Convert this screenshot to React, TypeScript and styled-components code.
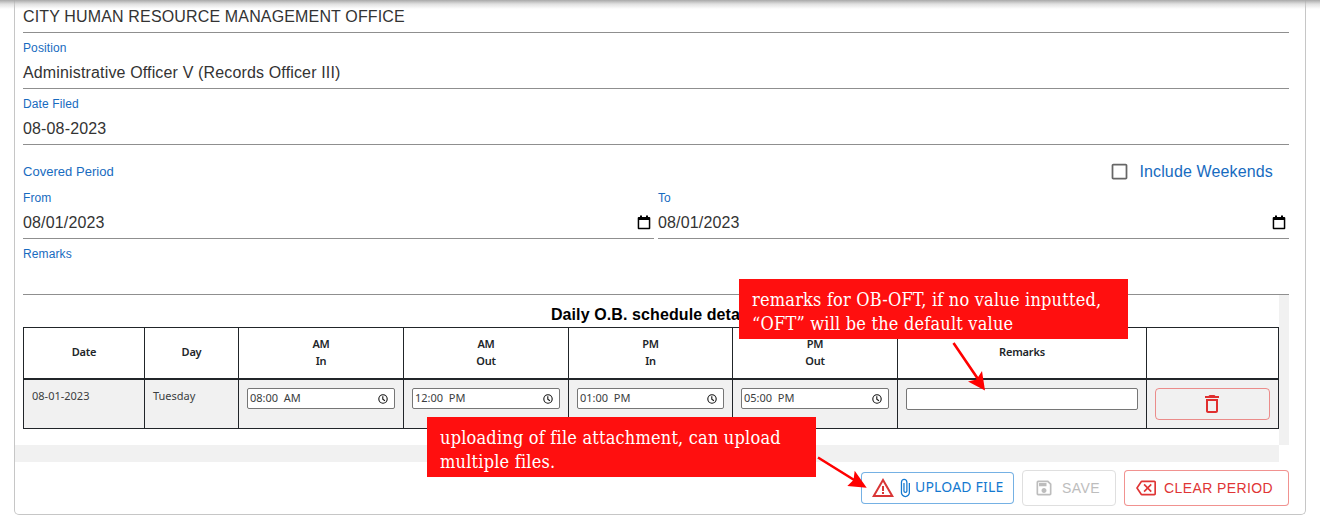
import React from "react";
import styled, { createGlobalStyle } from "styled-components";
import {
  MdAttachFile,
  MdCheckBoxOutlineBlank,
  MdDeleteOutline,
  MdOutlineBackspace,
  MdOutlineSave,
  MdWarningAmber,
} from "react-icons/md";

const GlobalStyle = createGlobalStyle`
  *, *::before, *::after { box-sizing: border-box; }
  body { margin: 0; background: #fff; overflow: hidden; }
`;

const Page = styled.main`
  position: relative;
  width: 1320px;
  height: 527px;
  overflow: hidden;
  padding: 0 14px;
  font-family: "Liberation Sans", Arial, sans-serif;
  color: #333;
`;

const TopShadow = styled.div`
  position: absolute;
  inset: 0 0 auto 0;
  height: 9px;
  background: linear-gradient(#a9a9a9, rgba(200, 200, 200, 0.55) 45%, rgba(255, 255, 255, 0));
`;

const Card = styled.section`
  width: 1292px;
  height: 515px;
  padding: 1px 16px 0 8px;
  border: 1px solid #c6c6c6;
  border-top: 0;
  border-radius: 0 0 5px 5px;
`;

const Stack = styled.div`
  display: flex;
  flex-direction: column;
  gap: 8px;
`;

const Field = styled.div`
  flex: 1;
`;

const Label = styled.div`
  height: 16px;
  line-height: 14px;
  font-size: 12px;
  letter-spacing: 0.12px;
  color: #176bc0;
`;

const Value = styled.div`
  display: flex;
  align-items: center;
  justify-content: space-between;
  height: 32px;
  padding-right: 3px;
  border-bottom: 1px solid #8f8f8f;
  font-size: 16px;
  letter-spacing: 0.15px;
`;

const PeriodHeader = styled.div`
  display: flex;
  align-items: center;
  justify-content: space-between;
  height: 46px;
  padding: 7px 16px 0 0;
  color: #176bc0;
`;

const PeriodTitle = styled.span`
  font-size: 13px;
  letter-spacing: 0.03px;
`;

const CheckLabel = styled.label`
  display: flex;
  align-items: center;
  gap: 9px;
  font-size: 16px;
  letter-spacing: 0.14px;
  svg { color: #666; }
`;

const PeriodRow = styled.div`
  display: flex;
  gap: 4px;
  margin-bottom: 8px;
`;

const ScrollRegion = styled.div`
  display: grid;
  grid-template-columns: 1256px 10px;
  grid-template-rows: 150px 17px;
`;

const ScrollContent = styled.div``;

const VerticalTrack = styled.div`
  background: #f1f1f1;
`;

const HorizontalTrack = styled.div`
  margin-left: -8px;
  background: #f1f1f1;
`;

const TableTitle = styled.h2`
  height: 32px;
  margin: 0;
  padding: 4px 0 0 7px;
  line-height: 32px;
  text-align: center;
  font-size: 16px;
  letter-spacing: 0.1px;
  color: #000;
`;

const Table = styled.div`
  border: 1px solid #212529;
  width: 1256px;
  font-family: "Noto Sans", "Open Sans", sans-serif;
  color: #212529;
`;

const TableRow = styled.div<{ $head?: boolean }>`
  display: grid;
  grid-template-columns: 120px 94px 165px 165px 164px 165px 249px 132px;
  height: ${(p) => (p.$head ? 52 : 48)}px;
  background: ${(p) => (p.$head ? "#fff" : "#f1f1f1")};
  border-bottom: ${(p) => (p.$head ? "2px solid #212529" : "0")};
`;

const HeadCell = styled.div`
  display: flex;
  align-items: center;
  justify-content: center;
  padding-bottom: 3px;
  text-align: center;
  white-space: pre;
  font-size: 11px;
  line-height: 17px;
  font-weight: 600;
  letter-spacing: -0.2px;
  & + & { border-left: 1px solid #212529; }
`;

const Cell = styled.div`
  padding: 8px;
  font-size: 11px;
  line-height: 16px;
  color: #3a3d40;
  & + & { border-left: 1px solid #212529; }
`;

const InputBox = styled.div<{ $tall?: boolean }>`
  display: flex;
  align-items: center;
  justify-content: space-between;
  height: ${(p) => (p.$tall ? 22 : 21)}px;
  padding: 0 6px 1px 2px;
  border: 1px solid #767676;
  border-radius: 2px;
  background: #fff;
  white-space: pre;
  svg { position: relative; top: 1px; }
`;

const DeleteButton = styled.button`
  display: flex;
  align-items: center;
  justify-content: center;
  width: 115px;
  height: 32px;
  padding: 0 2px 0 0;
  border: 1px solid rgba(229, 57, 53, 0.55);
  border-radius: 4px;
  background: transparent;
  color: #e02f2f;
`;

const Actions = styled.div`
  display: flex;
  align-items: center;
  justify-content: flex-end;
  gap: 8px;
  height: 36px;
  margin-top: 8px;
`;

const tones = {
  blue: ["#1479d0", "rgba(25, 125, 210, 0.6)"],
  grey: ["#bdbdbd", "#dfdfdf"],
  red: ["#e03535", "rgba(229, 57, 53, 0.55)"],
};

const ActionButton = styled.button<{ $tone: keyof typeof tones; $width: number; $compact?: boolean }>`
  display: flex;
  align-items: center;
  gap: ${(p) => (p.$compact ? 0 : 8)}px;
  width: ${(p) => p.$width}px;
  height: ${(p) => (p.$compact ? 32 : 36)}px;
  padding: 0 0 0 ${(p) => (p.$compact ? 9 : 11)}px;
  border: 1px solid ${(p) => tones[p.$tone][1]};
  border-radius: 4px;
  background: #fff;
  color: ${(p) => tones[p.$tone][0]};
  font-family: inherit;
  font-size: 14px;
  letter-spacing: 0.4px;
  white-space: nowrap;
  svg { flex: none; }
`;

const UploadText = styled.span`
  padding-bottom: 4px;
  font-family: "Noto Sans", "Open Sans", sans-serif;
  font-size: 14px;
  letter-spacing: 0.2px;
`;

const WarningIcon = styled(MdWarningAmber)`
  color: #d93636;
`;

const Callout = styled.div<{ $x: number; $y: number }>`
  position: absolute;
  left: ${(p) => p.$x}px;
  top: ${(p) => p.$y}px;
  width: 389px;
  height: 60px;
  padding: 9px 0 0 13px;
  background: #ff0f0f;
  color: #fff;
  font-family: "DejaVu Serif Condensed", "DejaVu Serif", serif;
  font-stretch: condensed;
  font-size: 18px;
  letter-spacing: 0.2px;
  line-height: 24px;
  white-space: pre;
`;

const Arrows = styled.svg`
  position: absolute;
  left: 0;
  top: 0;
  pointer-events: none;
`;

const CalendarIcon = () => (
  <svg width="14" height="15" viewBox="0 0 14 15">
    <path d="M3 .5h2V2h4V.5h2V2h1.2Q13.300 2 13.300 3v10.300q0 1-1 1H1.700q-1 0-1-1V3q0-1 1-1H3zM2.200 5v7.800h9.600V5z" fill="#000" fillRule="evenodd" />
  </svg>
);

const ClockIcon = () => (
  <svg width="10" height="10" viewBox="0 0 10 10" fill="none" stroke="#111" strokeWidth="1.100">
    <circle cx="5" cy="5" r="4.200" />
    <path d="M4.800 2.300v3l2.100 1.500" />
  </svg>
);

const headings = ["Date", "Day", "AM\nIn", "AM\nOut", "PM\nIn", "PM\nOut", "Remarks", ""];
const times = ["08:00  AM", "12:00  PM", "01:00  PM", "05:00  PM"];

export default function App() {
  return (
    <Page>
      <GlobalStyle />
      <Card>
        <Stack>
          <Value>CITY HUMAN RESOURCE MANAGEMENT OFFICE</Value>
          <Field>
            <Label>Position</Label>
            <Value>Administrative Officer V (Records Officer III)</Value>
          </Field>
          <Field>
            <Label>Date Filed</Label>
            <Value>08-08-2023</Value>
          </Field>
        </Stack>
        <PeriodHeader>
          <PeriodTitle>Covered Period</PeriodTitle>
          <CheckLabel>
            <MdCheckBoxOutlineBlank size={21} />
            Include Weekends
          </CheckLabel>
        </PeriodHeader>
        <PeriodRow>
          <Field>
            <Label>From</Label>
            <Value>08/01/2023<CalendarIcon /></Value>
          </Field>
          <Field>
            <Label>To</Label>
            <Value>08/01/2023<CalendarIcon /></Value>
          </Field>
        </PeriodRow>
        <Field>
          <Label>Remarks</Label>
          <Value />
        </Field>
        <ScrollRegion>
          <ScrollContent>
            <TableTitle>Daily O.B. schedule details</TableTitle>
            <Table>
              <TableRow $head>
                {headings.map((h, i) => <HeadCell key={i}>{h}</HeadCell>)}
              </TableRow>
              <TableRow>
                <Cell>08-01-2023</Cell>
                <Cell>Tuesday</Cell>
                {times.map((t) => (
                  <Cell key={t}><InputBox>{t}<ClockIcon /></InputBox></Cell>
                ))}
                <Cell><InputBox $tall /></Cell>
                <Cell><DeleteButton aria-label="Delete"><MdDeleteOutline size={24} /></DeleteButton></Cell>
              </TableRow>
            </Table>
          </ScrollContent>
          <VerticalTrack />
          <HorizontalTrack />
        </ScrollRegion>
        <Actions>
          <ActionButton $tone="blue" $width={153} $compact>
            <WarningIcon size={24} />
            <MdAttachFile size={20} />
            <UploadText>UPLOAD FILE</UploadText>
          </ActionButton>
          <ActionButton $tone="grey" $width={94}>
            <MdOutlineSave size={20} />
            SAVE
          </ActionButton>
          <ActionButton $tone="red" $width={165}>
            <MdOutlineBackspace size={20} />
            CLEAR PERIOD
          </ActionButton>
        </Actions>
      </Card>
      <TopShadow />
      <Callout $x={739} $y={279}>{"remarks for OB-OFT, if no value inputted,\n“OFT” will be the default value"}</Callout>
      <Callout $x={427} $y={417}>{"uploading of file attachment, can upload\nmultiple files."}</Callout>
      <Arrows width="1320" height="527" fill="#f00">
        <path d="M953.500 343L978 379M818 457.500L855 480.500" stroke="#f00" strokeWidth="2.600" />
        <path d="M985 390.500L968 381.500L976.500 379.500L982 371Z" />
        <path d="M866.700 487.700L847.300 486L853.500 480L854.700 470.700Z" />
      </Arrows>
    </Page>
  );
}
